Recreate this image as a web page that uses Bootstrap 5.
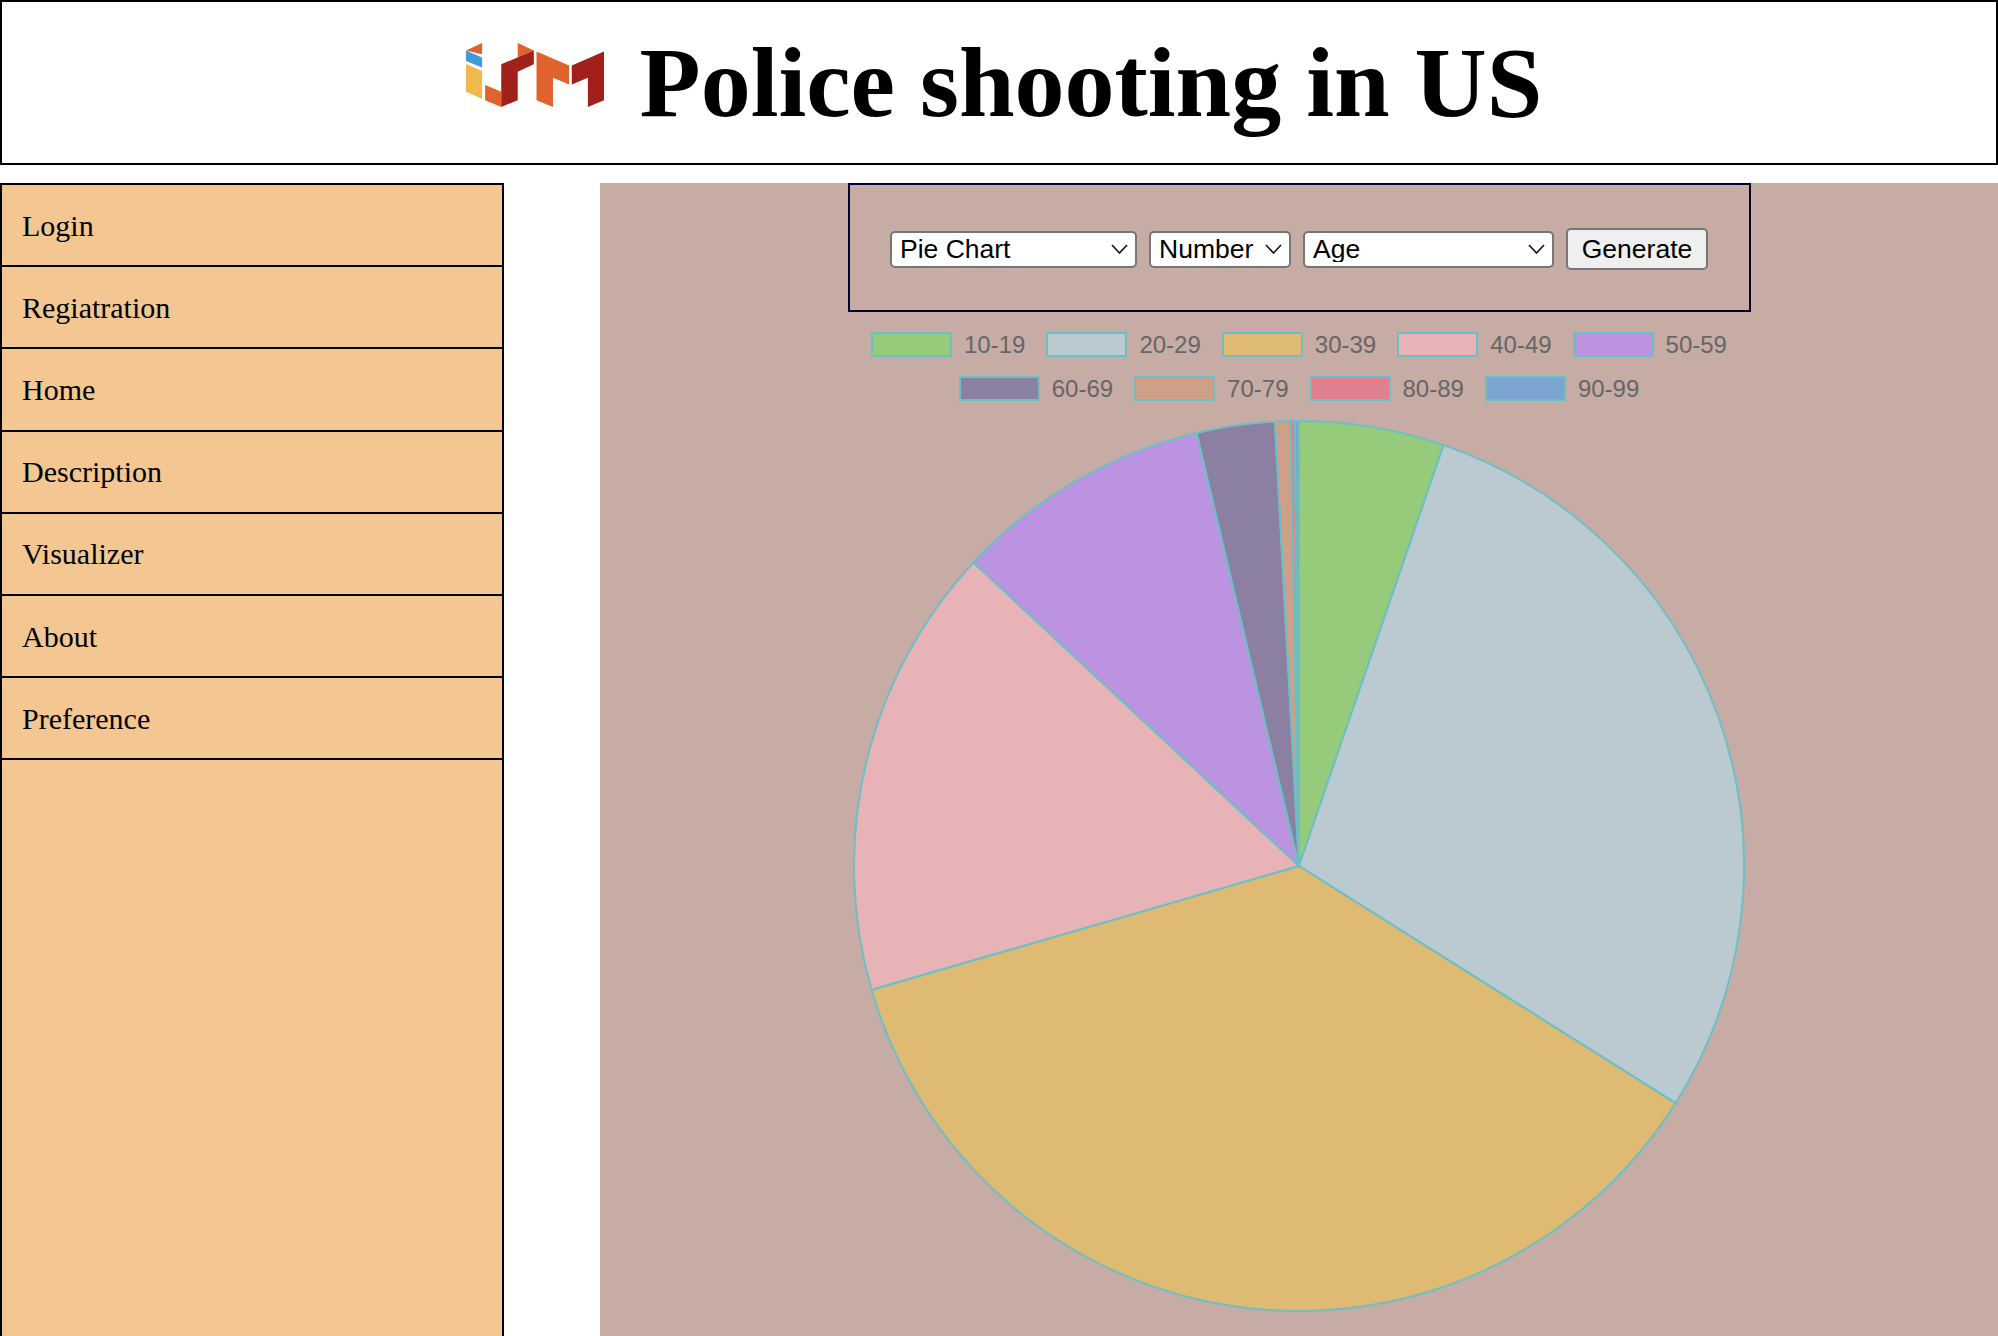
<!DOCTYPE html>
<html lang="en">
<head>
<meta charset="utf-8">
<title>Police shooting in US</title>
<link href="https://cdn.jsdelivr.net/npm/bootstrap@5.3.0/dist/css/bootstrap.min.css" rel="stylesheet">
<style>
html,body{height:1336px;overflow:hidden;background:#fff;color:#000;}
body{font-family:"Liberation Serif","Times New Roman",serif;}
.site-head{height:165px;border:2px solid #000;gap:36px;padding-left:10px;}
.site-head svg{width:138px;height:64px;margin-top:-16px;flex:none;}
.site-head h1{font-family:"Liberation Serif",serif;font-weight:700;font-size:100px;line-height:1;margin:0;white-space:nowrap;}
.page-body{margin-top:18px;height:1153px;}
.side-nav{width:504px;flex:none;background:#f4c691;border:2px solid #000;border-bottom:0;}
.side-link{display:flex;align-items:center;height:82.2px;padding:0 20px;font-size:30px;color:#000;text-decoration:none;border-bottom:2px solid #000;}
.chart-pane{margin-left:96px;flex:1;background:#c7aba5;}
.ctl-box{width:903px;height:129px;border:2px solid #00002a;padding-top:3px;gap:12px;}
.ctl-box .form-select,.ctl-box .btn{font-family:"Liberation Sans",Arial,sans-serif;font-size:26.5px;color:#000;border:2px solid #767676;border-radius:5px;}
.ctl-box .form-select{height:37px;line-height:1;padding:0 8px;background-color:#fff;background-size:17px 10px;background-position:right 7px center;background-image:url("data:image/svg+xml,%3csvg xmlns='http://www.w3.org/2000/svg' viewBox='0 0 17 10'%3e%3cpath fill='none' stroke='%23111' stroke-width='1.6' d='M1 1l7.5 8L16 1'/%3e%3c/svg%3e");}
.sel-a{width:247px!important;}
.sel-b{width:142px!important;}
.sel-c{width:251px!important;}
.ctl-box .btn{width:142px;height:42px;padding:0;background:#efefef;line-height:1;}
.legend-wrap{margin-top:20px;font-family:"Liberation Sans",Arial,sans-serif;font-size:24px;color:#666;line-height:25px;}
.legend-row{height:44px;gap:21px;}
.legend-item{gap:12px;}
.swatch{display:block;width:81px;height:25px;border:2px solid #6cc0c5;}
.pie-chart{display:block;width:894px;height:894px;margin:0 auto;margin-top:-1px;}
</style>
</head>
<body>
<header class="site-head d-flex align-items-center justify-content-center">
  <svg viewBox="83 125 411 190" aria-label="ISM logo" role="img">
    <polygon fill="#e0632d" points="83,147 131,125 131,158"/>
    <polygon fill="#429bd8" points="83,147 131,168 131,198 83,178"/>
    <polygon fill="#f0b94b" points="83,187 131,208 131,291 83,270"/>
    <polygon fill="#e0632d" points="140,250 188,270 188,315 140,295"/>
    <polygon fill="#e0632d" points="237,125 285,147 237,168"/>
    <polygon fill="#a1201a" points="188,188 285,147 285,188 237,210 237,295 188,315"/>
    <polygon fill="#e0632d" points="293,150 390,192 390,248 342,228 342,315 293,295"/>
    <polygon fill="#a1201a" points="398,192 494,150 494,295 446,315 446,228 398,248"/>
  </svg>
  <h1>Police shooting in US</h1>
</header>
<div class="page-body d-flex">
  <nav class="side-nav d-flex flex-column">
    <a class="side-link" href="#">Login</a>
    <a class="side-link" href="#">Regiatration</a>
    <a class="side-link" href="#">Home</a>
    <a class="side-link" href="#">Description</a>
    <a class="side-link" href="#">Visualizer</a>
    <a class="side-link" href="#">About</a>
    <a class="side-link" href="#">Preference</a>
  </nav>
  <main class="chart-pane">
    <form class="ctl-box d-flex align-items-center justify-content-center mx-auto">
      <select class="form-select sel-a"><option>Pie Chart</option></select>
      <select class="form-select sel-b"><option>Number</option></select>
      <select class="form-select sel-c"><option>Age</option></select>
      <button type="button" class="btn">Generate</button>
    </form>
    <div class="legend-wrap">
      <div class="legend-row d-flex justify-content-center" id="row1"></div>
      <div class="legend-row d-flex justify-content-center" id="row2"></div>
    </div>
    <svg class="pie-chart" viewBox="-447 -447 894 894" id="pie"></svg>
  </main>
</div>
<script>
var data=[
 ['10-19','#96cb7c',18.96],['20-29','#bbcad1',122.2],['30-39','#deba72',253.85],
 ['40-49','#e7b3b7',313],['50-59','#bb93e0',346.7],['60-69','#8c80a2',356.9],
 ['70-79','#cf9f87',358.9],['80-89','#e07f8e',359.5],['90-99','#7ba4d1',360]];
var R=445,prev=0,s='';
function pt(a){var r=a*Math.PI/180;return (R*Math.sin(r)).toFixed(2)+' '+(-R*Math.cos(r)).toFixed(2);}
data.forEach(function(d,i){
  s+='<path fill="'+d[1]+'" stroke="#6cc0c5" stroke-width="2" d="M0 0L'+pt(prev)+'A'+R+' '+R+' 0 '+((d[2]-prev)>180?1:0)+' 1 '+pt(d[2])+'Z"/>';
  prev=d[2];
  var el=document.createElement('div');
  el.className='legend-item d-flex';
  el.innerHTML='<span class="swatch" style="background:'+d[1]+'"></span><span>'+d[0]+'</span>';
  document.getElementById(i<5?'row1':'row2').appendChild(el);
});
document.getElementById('pie').innerHTML=s;
</script>
<script src="https://cdn.jsdelivr.net/npm/bootstrap@5.3.0/dist/js/bootstrap.bundle.min.js"></script>
</body>
</html>
